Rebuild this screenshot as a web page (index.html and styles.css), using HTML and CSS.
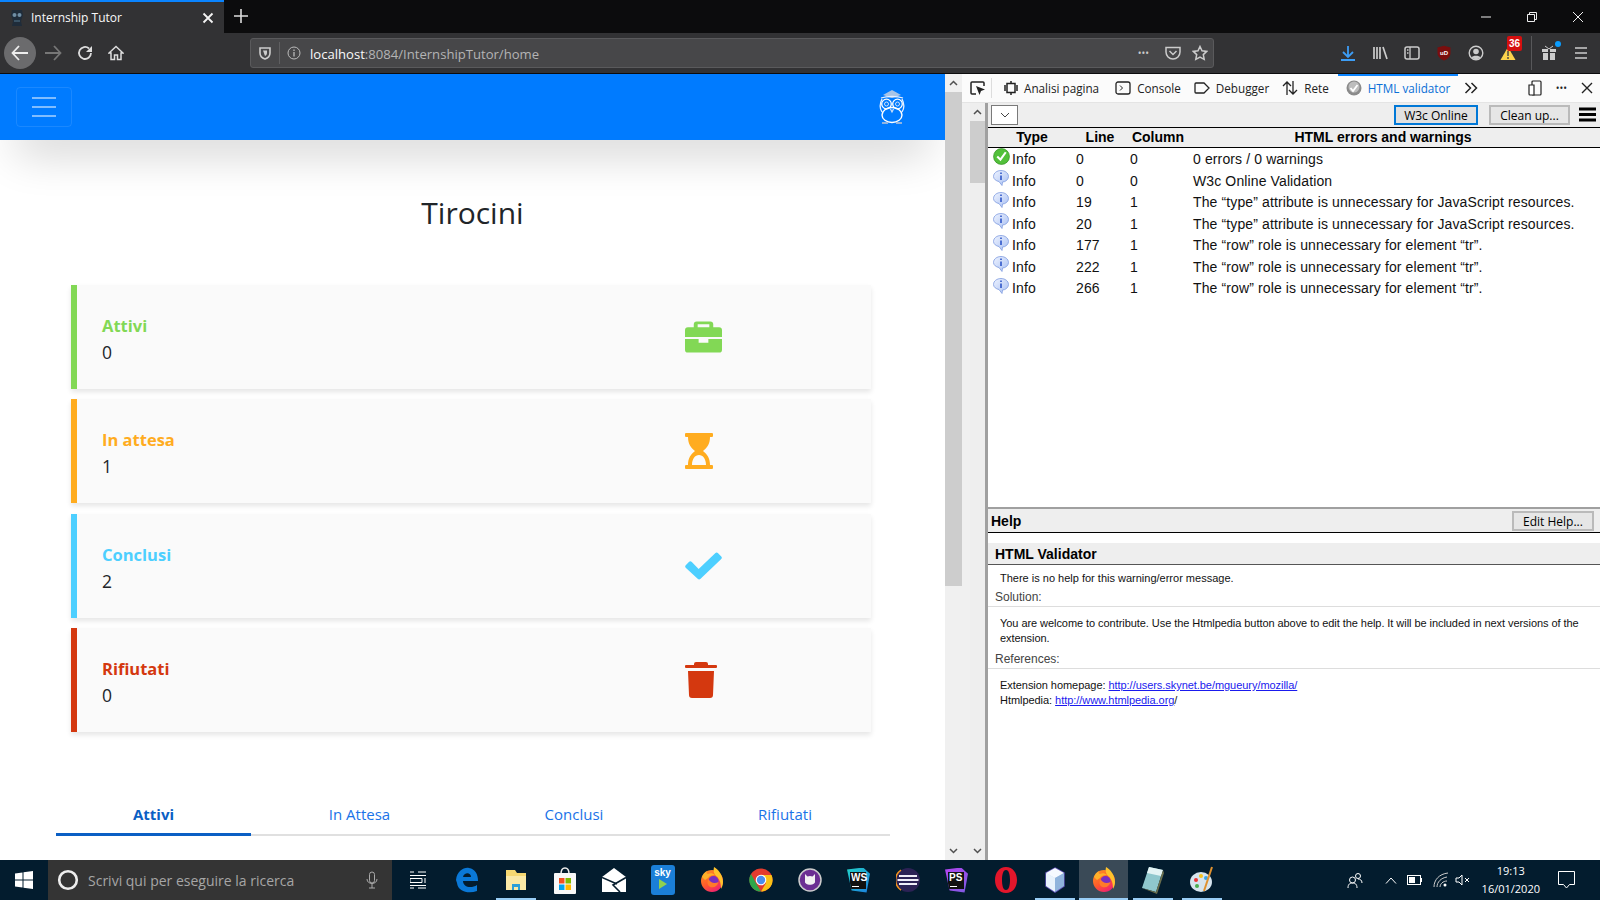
FILE: index.html
```html
<!DOCTYPE html>
<html lang="en">
<head>
    <meta charset="UTF-8">
    <title>Internship Tutor</title>
    <link rel="stylesheet" href="styles.css">
</head>
<body>
    <svg width="0" height="0" class="defs">
        <defs>
            <linearGradient id="ff-body" x1="0" y1="0" x2="0.6" y2="1">
                <stop offset="0" stop-color="#ff9a22"/>
                <stop offset="0.6" stop-color="#ff5b2b"/>
                <stop offset="1" stop-color="#f0246e"/>
            </linearGradient>
            <linearGradient id="info-fill" x1="0" y1="0" x2="1" y2="1">
                <stop offset="0" stop-color="#eef3ff"/>
                <stop offset="1" stop-color="#a9c0f2"/>
            </linearGradient>
            <g id="ff-logo">
                <circle cx="12" cy="14" r="11" fill="url(#ff-body)"/>
                <path d="M14 0c4 2 9 8 9 15 0 3-1 5-2 7 0-7-2-11-5-13-2-2-3-5-2-9z" fill="#ffc22c"/>
                <path d="M2 10c1-3 3-5 5-6-1 2 0 3 1 3 2-1 5-1 7 1-3 0-6 1-7 3l-3 2z" fill="#ffb02a"/>
                <circle cx="13.500" cy="14" r="5" fill="#7a2fc0"/>
                <path d="M8.500 12c2 4 6 5 10 3-1 4-4 6-8 5-3-1-4-5-2-8z" fill="#ff7a2a"/>
            </g>
            <g id="info-icon">
                <path d="M8 .500c4 0 7.500 2.500 7.500 6 0 3-3 5.500-6 5.500l-.5 3.500-3-4C3 11 .500 9 .500 6.500c0-3.500 3.500-6 7.500-6z" fill="url(#info-fill)" stroke="#7d9be0" stroke-width=".8"/>
                <path d="M8 5.500v4.500M8 2.500v1.500" stroke="#2e55c8" stroke-width="1.600"/>
            </g>
        </defs>
    </svg>

    <!-- Tab strip -->
    <div class="tabstrip">
        <div class="tab">
            <svg class="tab-favicon" width="16" height="18" viewBox="0 0 16 18"><path d="M3 1h10l1 5-2 6 1 5H3l1-5-2-6z" fill="#1f2c3a"/><circle cx="5.500" cy="6" r="2" fill="#6f8ea5"/><circle cx="10.500" cy="6" r="2" fill="#6f8ea5"/><path d="M5 12h6" stroke="#55788f"/></svg>
            <span class="tab-title">Internship Tutor</span>
            <svg class="tab-close" width="12" height="12" viewBox="0 0 12 12"><path d="M1.500 1.500l9 9M10.500 1.500l-9 9" stroke="#f4f4f4" stroke-width="1.800"/></svg>
        </div>
        <svg class="tab-new" width="16" height="16" viewBox="0 0 16 16"><path d="M8 1v14M1 8h14" stroke="#ddd" stroke-width="1.600"/></svg>
        <div class="window-btns">
            <svg width="12" height="12" viewBox="0 0 12 12"><path d="M1 6h10" stroke="#eee"/></svg>
            <svg width="12" height="12" viewBox="0 0 12 12"><path d="M1.500 3.500h7v7h-7zM3.500 3V1.500h7v7H9" stroke="#eee" fill="none"/></svg>
            <svg width="12" height="12" viewBox="0 0 12 12"><path d="M1 1l10 10M11 1L1 11" stroke="#eee"/></svg>
        </div>
    </div>

    <!-- Navigation toolbar -->
    <div class="toolbar">
        <div class="nav-btns">
            <div class="back-btn">
                <svg width="18" height="16" viewBox="0 0 18 16"><path d="M8 1L1.500 8 8 15M2 8h15" stroke="#eee" stroke-width="1.800" fill="none"/></svg>
            </div>
            <svg class="nav-icon" width="18" height="16" viewBox="0 0 18 16"><path d="M10 1l6.500 7L10 15M16 8H1" stroke="#777" stroke-width="1.800" fill="none"/></svg>
            <svg class="nav-icon" width="16" height="16" viewBox="0 0 16 16"><path d="M14 8a6 6 0 1 1-2-4.500" stroke="#ddd" stroke-width="1.800" fill="none"/><path d="M15 1v6H9z" fill="#ddd"/></svg>
            <svg class="nav-icon" width="16" height="16" viewBox="0 0 16 16"><path d="M8 1.500L1 8h2v6.500h3.500V10h3v4.500H13V8h2z" stroke="#ddd" stroke-width="1.500" fill="none"/></svg>
        </div>
        <div class="urlbar">
            <svg width="14" height="14" viewBox="0 0 14 14"><path d="M2 2h10v5c0 3-2 5-5 6-3-1-5-3-5-6z" stroke="#ccc" stroke-width="1.600" fill="none"/><path d="M5 4.500h4v2.500c0 1.500-1 2.500-2 3z" fill="#ccc"/></svg>
            <span class="url-sep"></span>
            <svg width="14" height="14" viewBox="0 0 14 14"><circle cx="7" cy="7" r="6" stroke="#bbb" fill="none"/><path d="M7 6v4.500M7 3.500v1.500" stroke="#bbb" stroke-width="1.300"/></svg>
            <span class="url-text"><b>localhost</b>:8084/InternshipTutor/home</span>
            <span class="url-dots">•••</span>
            <svg class="url-pocket" width="16" height="14" viewBox="0 0 16 14"><path d="M1 1.500h14V6a7 7 0 0 1-14 0z" stroke="#ccc" stroke-width="1.500" fill="none"/><path d="M4.500 5L8 8.500 11.500 5" stroke="#ccc" stroke-width="1.500" fill="none"/></svg>
            <svg width="16" height="16" viewBox="0 0 16 16"><path d="M8 1.500l2 4.300 4.700.6-3.400 3.200.9 4.700L8 12l-4.200 2.300.9-4.700L1.300 6.400 6 5.800z" stroke="#ccc" stroke-width="1.500" fill="none"/></svg>
        </div>
        <div class="toolbar-right">
            <svg width="16" height="16" viewBox="0 0 16 16"><path d="M8 1v10M3 7l5 5 5-5M1 15h14" stroke="#3d9df5" stroke-width="1.800" fill="none"/></svg>
            <svg width="16" height="16" viewBox="0 0 16 16"><path d="M2 2v12M5 2v12M8 2v12M11 2l4 12" stroke="#ccc" stroke-width="1.700" fill="none"/></svg>
            <svg width="16" height="16" viewBox="0 0 16 16"><rect x="1" y="2" width="14" height="12" rx="2" stroke="#ccc" stroke-width="1.500" fill="none"/><path d="M6 2v12M3 5h1.500M3 8h1.500" stroke="#ccc" stroke-width="1.300"/></svg>
            <svg width="16" height="16" viewBox="0 0 16 16"><path d="M1.500 2.500L8 .8l6.500 1.700V8c0 3.500-3 6-6.500 7.500C4.500 14 1.500 11.500 1.500 8z" fill="#7a0e0e"/><text x="8" y="10" class="ublock-text">uD</text></svg>
            <svg width="16" height="16" viewBox="0 0 16 16"><circle cx="8" cy="8" r="6.800" stroke="#ccc" stroke-width="1.400" fill="none"/><circle cx="8" cy="6.500" r="2.800" fill="#ccc"/><path d="M3.500 12.500c1-2.500 8-2.500 9 0a7 7 0 0 1-9 0z" fill="#ccc"/></svg>
            <div class="warn-icon">
                <svg width="16" height="15" viewBox="0 0 16 15"><path d="M8 1l7.500 13H.500z" fill="#fbd34c"/><path d="M8 5v5M8 11v2" stroke="#444" stroke-width="1.400"/></svg>
                <span class="warn-badge">36</span>
            </div>
            <span class="toolbar-sep"></span>
            <div class="gift-icon">
                <svg width="16" height="16" viewBox="0 0 16 16"><path d="M1 4h6v3H1zM9 4h6v3H9zM2 8h5v7H2zM9 8h5v7H9z" fill="#ccc"/><path d="M4 1l4 3 4-3" stroke="#ccc" fill="none"/></svg>
                <span class="gift-dot"></span>
            </div>
            <svg width="16" height="14" viewBox="0 0 16 14"><path d="M2 2h12M2 7h12M2 12h12" stroke="#ccc" stroke-width="1.700"/></svg>
        </div>
    </div>

    <div class="main">
        <!-- The page under test -->
        <div class="page">
            <div class="navbar">
                <div class="navbar-toggler">
                    <span></span><span></span><span></span>
                </div>
                <svg class="navbar-logo" width="26" height="36" viewBox="0 0 26 36">
                    <path d="M4 6L13 1l9 5-9 3z" fill="#a9c4e6"/>
                    <path d="M2 9c6-2 16-2 22 0M3 10c-3 6-2 10 0 13" stroke="#e8f1ff" stroke-width="1.300" fill="none"/>
                    <path d="M23 10c3 6 2 10 0 13" stroke="#e8f1ff" stroke-width="1.300" fill="none"/>
                    <circle cx="7.500" cy="15" r="4.800" stroke="#fff" stroke-width="1.300" fill="none"/>
                    <circle cx="18.500" cy="15" r="4.800" stroke="#fff" stroke-width="1.300" fill="none"/>
                    <circle cx="7.500" cy="15" r="2" stroke="#cfe0f7" fill="none"/>
                    <circle cx="18.500" cy="15" r="2" stroke="#cfe0f7" fill="none"/>
                    <path d="M11.500 20l1.500 3 1.500-3" stroke="#cfe0f7" stroke-width="1.200" fill="none"/>
                    <ellipse cx="13" cy="26" rx="10" ry="7.500" stroke="#fff" stroke-width="1.400" fill="none"/>
                    <path d="M3 34h6M17 34h6" stroke="#8fb3e0" stroke-width="2"/>
                </svg>
            </div>
            <h1 class="page-title">Tirocini</h1>

            <div class="stats">
                <div class="stat stat-green">
                    <div class="stat-text"><h5>Attivi</h5><p>0</p></div>
                    <svg class="stat-icon" width="37" height="32" viewBox="0 0 38 32"><path d="M12 0h14a3 3 0 0 1 3 3v3h6a3 3 0 0 1 3 3v7H0V9a3 3 0 0 1 3-3h6V3a3 3 0 0 1 3-3zm1 3v3h12V3zM0 18h14v4h10v-4h14v11a3 3 0 0 1-3 3H3a3 3 0 0 1-3-3z" fill="#82d855" fill-rule="evenodd"/></svg>
                </div>
                <div class="stat stat-orange">
                    <div class="stat-text"><h5>In attesa</h5><p>1</p></div>
                    <svg class="stat-icon" width="28" height="36" viewBox="0 0 28 36"><path d="M1 0h26a1 1 0 0 1 1 1v2a1 1 0 0 1-1 1h-2c0 7-3 11-7 14 4 3 7 7 7 14h2a1 1 0 0 1 1 1v2a1 1 0 0 1-1 1H1a1 1 0 0 1-1-1v-2a1 1 0 0 1 1-1h2c0-7 3-11 7-14-4-3-7-7-7-14H1a1 1 0 0 1-1-1V1a1 1 0 0 1 1-1zm6 32h14c0-6-3-10-7-10s-7 4-7 10z" fill="#ffac1f" fill-rule="evenodd"/></svg>
                </div>
                <div class="stat stat-blue">
                    <div class="stat-text"><h5>Conclusi</h5><p>2</p></div>
                    <svg class="stat-icon" width="37" height="28" viewBox="0 0 38 28"><path d="M13 27L1 16a2 2 0 0 1 0-3l3-3a2 2 0 0 1 3 0l7 7L31 1a2 2 0 0 1 3 0l3 3a2 2 0 0 1 0 3L16 27a2 2 0 0 1-3 0z" fill="#4dcfff"/></svg>
                </div>
                <div class="stat stat-red">
                    <div class="stat-text"><h5>Rifiutati</h5><p>0</p></div>
                    <svg class="stat-icon" width="32" height="36" viewBox="0 0 32 36"><path d="M11 0h10a2 2 0 0 1 2 2v1h8a1 1 0 0 1 1 1v1a1 1 0 0 1-1 1H1A1 1 0 0 1 0 5V4a1 1 0 0 1 1-1h8V2a2 2 0 0 1 2-2zM3 9h26l-1 24a3 3 0 0 1-3 3H7a3 3 0 0 1-3-3z" fill="#d4380f"/></svg>
                </div>
            </div>

            <div class="tabs">
                <a class="tabs-item active">Attivi</a>
                <a class="tabs-item">In Attesa</a>
                <a class="tabs-item">Conclusi</a>
                <a class="tabs-item">Rifiutati</a>
            </div>
        </div>

        <div class="scrollbar">
            <div class="scroll-arrow"><svg width="9" height="6" viewBox="0 0 9 6"><path d="M1 5l3.500-3.500L8 5" stroke="#505050" stroke-width="1.500" fill="none"/></svg></div>
            <div class="scroll-thumb outer-thumb"></div>
            <div class="scroll-space"></div>
            <div class="scroll-arrow"><svg width="9" height="6" viewBox="0 0 9 6"><path d="M1 1l3.500 3.500L8 1" stroke="#505050" stroke-width="1.500" fill="none"/></svg></div>
        </div>

        <!-- Devtools -->
        <div class="devtools">
            <div class="dev-tabs">
                <svg class="dev-picker" width="16" height="16" viewBox="0 0 16 16"><path d="M6 14H2a1 1 0 0 1-1-1V3a1 1 0 0 1 1-1h11a1 1 0 0 1 1 1v3" stroke="#222" stroke-width="1.500" fill="none"/><path d="M6 6l9 3.500-4 1.500-1.500 4z" fill="#222"/></svg>
                <span class="dev-sep"></span>
                <div class="dev-tab dev-tab-first"><svg width="14" height="16" viewBox="0 0 14 16"><path d="M3 3.500h8v9H3zM7 1v2M7 13v2M1 5v6M13 5v6" stroke="#222" stroke-width="1.500" fill="none"/></svg>Analisi pagina</div>
                <div class="dev-tab"><svg width="16" height="14" viewBox="0 0 16 14"><rect x="1" y="1" width="14" height="12" rx="2" stroke="#222" stroke-width="1.300" fill="none"/><path d="M5 4.500L7.500 7 5 9.500" stroke="#222" fill="none"/></svg>Console</div>
                <div class="dev-tab"><svg width="16" height="12" viewBox="0 0 16 12"><path d="M2 1h8l5 5-5 5H2a1 1 0 0 1-1-1V2a1 1 0 0 1 1-1z" stroke="#222" stroke-width="1.300" fill="none"/></svg>Debugger</div>
                <div class="dev-tab"><svg width="16" height="16" viewBox="0 0 16 16"><path d="M5 15V2M1 6l4-4 4 4M11 1v13M7 10l4 4 4-4" stroke="#222" stroke-width="1.300" fill="none"/></svg>Rete</div>
                <div class="dev-tab dev-tab-active"><svg width="16" height="16" viewBox="0 0 16 16"><circle cx="8" cy="8" r="7.500" fill="#8a8a8a"/><circle cx="8" cy="7" r="5.500" fill="#bdbdbd"/><path d="M4.500 8l2.500 3 4.500-6" stroke="#fff" stroke-width="1.800" fill="none"/></svg>HTML validator</div>
                <svg class="dev-more" width="14" height="12" viewBox="0 0 14 12"><path d="M1.500 1l5 5-5 5M7.500 1l5 5-5 5" stroke="#222" stroke-width="1.500" fill="none"/></svg>
                <div class="dev-tools-right">
                    <svg width="14" height="16" viewBox="0 0 14 16"><rect x="4" y="1" width="9" height="14" rx="1" stroke="#222" stroke-width="1.200" fill="none"/><path d="M1 5v9a1 1 0 0 0 1 1h4V5z" fill="#fff" stroke="#222" stroke-width="1.200"/></svg>
                    <span class="dev-dots">•••</span>
                    <svg width="12" height="12" viewBox="0 0 12 12"><path d="M1 1l10 10M11 1L1 11" stroke="#222" stroke-width="1.400"/></svg>
                </div>
            </div>
            <div class="dev-body">
                <div class="scrollbar inner">
                    <div class="scroll-arrow"><svg width="9" height="6" viewBox="0 0 9 6"><path d="M1 5l3.500-3.500L8 5" stroke="#505050" stroke-width="1.500" fill="none"/></svg></div>
                    <div class="scroll-thumb inner-thumb"></div>
                    <div class="scroll-space"></div>
                    <div class="scroll-arrow"><svg width="9" height="6" viewBox="0 0 9 6"><path d="M1 1l3.500 3.500L8 1" stroke="#505050" stroke-width="1.500" fill="none"/></svg></div>
                </div>
                <div class="validator">
                    <div class="val-toolbar">
                        <div class="val-select"><svg width="10" height="6" viewBox="0 0 10 6"><path d="M1 1l4 4 4-4" stroke="#444" fill="none"/></svg></div>
                        <button class="val-btn val-btn-focus">W3c Online</button>
                        <button class="val-btn">Clean up...</button>
                        <svg class="val-menu" width="17" height="16" viewBox="0 0 17 16"><path d="M0 2h17M0 7.500h17M0 13h17" stroke="#000" stroke-width="3"/></svg>
                    </div>
                    <div class="val-head">
                        <span>Type</span>
                        <span>Line</span>
                        <span>Column</span>
                        <span>HTML errors and warnings</span>
                    </div>
                    <div class="val-rows">
                        <div class="val-row"><span class="row-icon"><svg width="17" height="17" viewBox="0 0 16 16"><circle cx="8" cy="8" r="7.500" fill="#52c03a" stroke="#2d8a1e" stroke-width=".6"/><path d="M4 8l3 3 5-7" stroke="#fff" stroke-width="2" fill="none"/></svg></span><span class="cell-type">Info</span><span class="cell-line">0</span><span class="cell-col">0</span><span>0 errors / 0 warnings</span></div>
                        <div class="val-row"><span class="row-icon"><svg width="16" height="16" viewBox="0 0 16 16"><use href="#info-icon"/></svg></span><span class="cell-type">Info</span><span class="cell-line">0</span><span class="cell-col">0</span><span>W3c Online Validation</span></div>
                        <div class="val-row"><span class="row-icon"><svg width="16" height="16" viewBox="0 0 16 16"><use href="#info-icon"/></svg></span><span class="cell-type">Info</span><span class="cell-line">19</span><span class="cell-col">1</span><span>The “type” attribute is unnecessary for JavaScript resources.</span></div>
                        <div class="val-row"><span class="row-icon"><svg width="16" height="16" viewBox="0 0 16 16"><use href="#info-icon"/></svg></span><span class="cell-type">Info</span><span class="cell-line">20</span><span class="cell-col">1</span><span>The “type” attribute is unnecessary for JavaScript resources.</span></div>
                        <div class="val-row"><span class="row-icon"><svg width="16" height="16" viewBox="0 0 16 16"><use href="#info-icon"/></svg></span><span class="cell-type">Info</span><span class="cell-line">177</span><span class="cell-col">1</span><span>The “row” role is unnecessary for element “tr”.</span></div>
                        <div class="val-row"><span class="row-icon"><svg width="16" height="16" viewBox="0 0 16 16"><use href="#info-icon"/></svg></span><span class="cell-type">Info</span><span class="cell-line">222</span><span class="cell-col">1</span><span>The “row” role is unnecessary for element “tr”.</span></div>
                        <div class="val-row"><span class="row-icon"><svg width="16" height="16" viewBox="0 0 16 16"><use href="#info-icon"/></svg></span><span class="cell-type">Info</span><span class="cell-line">266</span><span class="cell-col">1</span><span>The “row” role is unnecessary for element “tr”.</span></div>
                    </div>
                    <div class="help-bar">
                        <span class="help-title">Help</span>
                        <button class="val-btn">Edit Help...</button>
                    </div>
                    <div class="help-body">
                        <h3 class="help-h3">HTML Validator</h3>
                        <p class="help-text help-first">There is no help for this warning/error message.</p>
                        <div class="help-sub">Solution:</div>
                        <p class="help-text help-para">You are welcome to contribute. Use the Htmlpedia button above to edit the help. It will be included in next versions of the extension.</p>
                        <div class="help-sub">References:</div>
                        <p class="help-text help-refs">Extension homepage: <a>http://users.skynet.be/mgueury/mozilla/</a><br>Htmlpedia: <a>http://www.htmlpedia.org</a>/</p>
                    </div>
                </div>
            </div>
        </div>
    </div>

    <!-- Windows taskbar -->
    <div class="taskbar">
        <div class="start"><svg width="18" height="18" viewBox="0 0 18 18"><path d="M0 2.500L7.500 1.400V8.500H0zM8.500 1.300L18 0v8.500H8.500zM0 9.500h7.500v7.100L0 15.500zM8.500 9.500H18V18l-9.500-1.300z" fill="#fff"/></svg></div>
        <div class="search">
            <svg width="22" height="22" viewBox="0 0 22 22"><circle cx="11" cy="11" r="8.800" stroke="#eee" stroke-width="2.600" fill="none"/></svg>
            <span class="search-text">Scrivi qui per eseguire la ricerca</span>
            <svg width="12" height="18" viewBox="0 0 12 18"><rect x="3.500" y="1" width="5" height="11" rx="2.500" stroke="#aaa" fill="none"/><path d="M1 8c0 6 10 6 10 0M6 13v4M3 17h6" stroke="#aaa" fill="none"/></svg>
        </div>
        <div class="task-apps">
            <div class="app"><svg width="16" height="18" viewBox="0 0 16 18"><path d="M0 1h4M8 1h8M0 4.500h16M0 7.500h12v4H0zM0 14.500h16M0 17h4M8 17h8M15 7v5" stroke="#fff" fill="none"/></svg></div>
            <div class="app"><svg width="24" height="26" viewBox="0 0 24 26"><path d="M1 13C2 4 9 0 14 1c6 1 9 6 9 13H8c0 6 8 8 14 4v6c-8 3-19 1-20-8zm7-3h8c0-5-7-5-8 0z" fill="#0a78d7" fill-rule="evenodd"/></svg></div>
            <div class="app running"><svg width="24" height="24" viewBox="0 0 24 24"><path d="M2 2h9l2 3h9v17H2z" fill="#f6d871"/><rect x="2" y="8" width="20" height="14" fill="#fbe9a6"/><path d="M8 22v-6h8v6z" fill="#2b9fd9"/><rect x="10" y="19" width="4" height="3" fill="#fbe9a6"/></svg></div>
            <div class="app"><svg width="24" height="28" viewBox="0 0 24 28"><path d="M8 8c0-8 8-8 8 0" stroke="#eee" stroke-width="1.500" fill="none"/><rect x="1" y="7" width="22" height="21" rx="1" fill="#f8f8f8"/><rect x="6" y="12" width="5.500" height="5.500" fill="#f25022"/><rect x="12.500" y="12" width="5.500" height="5.500" fill="#7fba00"/><rect x="6" y="18.500" width="5.500" height="5.500" fill="#00a4ef"/><rect x="12.500" y="18.500" width="5.500" height="5.500" fill="#ffb900"/></svg></div>
            <div class="app"><svg width="24" height="24" viewBox="0 0 24 24"><path d="M0 9L12 0l12 9v15H0z" fill="#fff"/><path d="M0 9.500l15 6.500M24 9.500L11 17l7 7" stroke="#061d2e" stroke-width="1.600" fill="none"/></svg></div>
            <div class="app"><div class="sky-icon"><span class="sky-word">sky</span><svg width="8" height="10" viewBox="0 0 8 10"><path d="M0 0l8 5-8 5z" fill="#8fd14f"/></svg></div></div>
            <div class="app"><svg width="24" height="26" viewBox="0 0 24 26"><use href="#ff-logo"/></svg></div>
            <div class="app"><svg width="24" height="24" viewBox="0 0 24 24"><circle cx="12" cy="12" r="11.500" fill="#e33b2e"/><path d="M2 6l6 11 4 6.500A11.500 11.500 0 0 1 2 6z" fill="#2ea64a"/><path d="M12 7h10.500A11.500 11.500 0 0 1 12 23.500L17 15z" fill="#fbc116"/><circle cx="12" cy="12" r="5.300" fill="#fff"/><circle cx="12" cy="12" r="4.200" fill="#4a8df0"/></svg></div>
            <div class="app"><svg width="24" height="24" viewBox="0 0 24 24"><circle cx="12" cy="12" r="11" fill="#6b2f93" stroke="#ccc" stroke-width="1.500"/><path d="M7 6l2.500 2.500c2-.7 3-.7 5 0L17 6v7c1 5-11 5-10 0z" fill="#f2f2f2"/></svg></div>
            <div class="app"><div class="ws-icon"><span>WS</span></div></div>
            <div class="app"><svg width="24" height="24" viewBox="0 0 24 24"><circle cx="12" cy="12" r="12" fill="#2c2255"/><path d="M3 8h18M1.500 12h21M3 16h18" stroke="#f0eef8" stroke-width="2"/><path d="M5 2a12 12 0 0 0 0 20" stroke="#f7941e" stroke-width="1.500" fill="none"/></svg></div>
            <div class="app"><div class="ps-icon"><span>PS</span></div></div>
            <div class="app"><svg width="24" height="26" viewBox="0 0 24 26"><path d="M12 0C5 0 1 6 1 13s4 13 11 13 11-6 11-13S19 0 12 0zm0 3c3 0 4 5 4 10s-1 10-4 10-4-5-4-10 1-10 4-10z" fill="#e3162b" fill-rule="evenodd"/></svg></div>
            <div class="app running"><svg width="22" height="26" viewBox="0 0 22 26"><path d="M11 1l9 5v13l-9 6-9-6V6z" fill="#bdd7f5" stroke="#5b4fb0" stroke-width="1.500"/><path d="M11 11v14l-9-6V6z" fill="#e8f2fc"/><path d="M11 1l9 5-9 5-9-5z" fill="#f5f9ff"/><path d="M20 6v13l-9 6V11z" fill="#8fb3dc"/></svg></div>
            <div class="app app-active running"><svg width="24" height="26" viewBox="0 0 24 26"><use href="#ff-logo"/></svg></div>
            <div class="app running"><svg width="24" height="28" viewBox="0 0 24 28"><path d="M8 1l14 3-7 22-14-4z" fill="#8fc7cd"/><path d="M8 1l14 3-2 6-14-3z" fill="#e3f3f4"/><path d="M1 22l14 4 7-22 1 3-7 21z" fill="#6b6f4e"/></svg></div>
            <div class="app running"><svg width="24" height="28" viewBox="0 0 24 28"><ellipse cx="11" cy="16" rx="11" ry="10" fill="#d7e4ee"/><circle cx="6" cy="14" r="2" fill="#e33"/><circle cx="11" cy="10" r="2" fill="#f6c21c"/><circle cx="16" cy="12" r="2" fill="#38a4e8"/><circle cx="7" cy="20" r="2" fill="#4caf50"/><path d="M22 1l-8 24" stroke="#e0912f" stroke-width="2"/></svg></div>
        </div>
        <div class="tray">
            <svg width="16" height="16" viewBox="0 0 16 16"><circle cx="5.500" cy="8" r="3" stroke="#fff" fill="none"/><circle cx="11" cy="4" r="2.500" stroke="#fff" fill="none"/><path d="M1 16c0-4 2-5 4.500-5S10 12 10 16M11 7c2 0 4 1 4 4" stroke="#fff" fill="none"/></svg>
            <svg class="tray-chevron" width="12" height="7" viewBox="0 0 12 7"><path d="M1 6.500L6 1l5 5.500" stroke="#fff" fill="none"/></svg>
            <svg class="tray-battery" width="16" height="10" viewBox="0 0 16 10"><rect x=".5" y=".5" width="13" height="9" stroke="#fff" fill="none"/><rect x="2" y="2" width="6" height="6" fill="#fff"/><path d="M14.500 3v4" stroke="#fff"/></svg>
            <svg class="tray-wifi" width="16" height="16" viewBox="0 0 16 16"><path d="M1 15C1 8 6 2 15 1M4 15c0-5 4-9 10-10M7 15c0-3 3-6 7-6" stroke="#ccc" fill="none"/><circle cx="12" cy="13" r="1.500" fill="#fff"/></svg>
            <svg width="16" height="14" viewBox="0 0 16 14"><path d="M1 5v4h3l3 3V2L4 5z" stroke="#fff" fill="none"/><path d="M10 5l4 4M14 5l-4 4" stroke="#fff"/></svg>
            <div class="clock"><div>19:13</div><div>16/01/2020</div></div>
            <svg class="tray-notify" width="17" height="18" viewBox="0 0 17 18"><path d="M.5.500h16v13h-5l-3 3.500-3-3.500h-5z" stroke="#fff" fill="none"/></svg>
        </div>
    </div>
</body>
</html>
```

FILE: styles.css
```css
* {
    margin: 0;
    padding: 0;
    box-sizing: border-box;
}
body {
    width: 1600px;
    height: 900px;
    overflow: hidden;
    font-family: "Open Sans", "Noto Sans", sans-serif;
    background-color: #fff;
}
.defs {
    position: absolute;
}

/* Browser chrome */
.tabstrip {
    display: flex;
    align-items: stretch;
    height: 33px;
    background-color: #0c0c0d;
}
.tab {
    display: flex;
    align-items: center;
    width: 224px;
    padding: 0 10px 0 9px;
    background-color: #323234;
    border-top: 2px solid #0a84ff;
    color: #f9f9fa;
}
.tab-title {
    flex: 1;
    margin-left: 6px;
    font-size: 12px;
}
.tab-new {
    align-self: center;
    margin: -1px 0 0 9px;
}
.window-btns {
    display: flex;
    align-items: center;
    gap: 34px;
    margin-left: auto;
    padding-right: 16px;
}
.toolbar {
    display: flex;
    align-items: center;
    height: 41px;
    background-color: #323234;
    border-bottom: 1px solid #0c0c0d;
}
.nav-btns {
    display: flex;
    align-items: center;
    width: 250px;
    padding-left: 4px;
}
.back-btn {
    display: flex;
    align-items: center;
    justify-content: center;
    width: 32px;
    height: 32px;
    border-radius: 50%;
    background-color: #6b6b6d;
}
.nav-icon:nth-child(2) {
    margin-left: 8px;
}
.nav-icon:nth-child(3) {
    margin-left: 15px;
}
.nav-icon:nth-child(4) {
    margin-left: 15px;
}
.urlbar {
    display: flex;
    align-items: center;
    gap: 7px;
    width: 964px;
    height: 30px;
    padding: 0 5px 0 7px;
    background-color: #474749;
    border: 1px solid #5a5a5c;
    border-radius: 3px;
}
.url-sep {
    width: 1px;
    height: 22px;
    background-color: #5f5f61;
}
.url-text {
    flex: 1;
    margin: 1px 0 0 2px;
    font-size: 13.100px;
    color: #b4b4b5;
}
.url-text b {
    font-weight: normal;
    color: #f9f9fa;
}
.url-dots {
    margin-right: 9px;
    font-size: 10px;
    color: #ccc;
}
.url-pocket {
    margin-right: 4px;
}
.toolbar-right {
    display: flex;
    align-items: center;
    gap: 16px;
    margin-left: 126px;
}
.ublock-text {
    font-family: "Liberation Sans", sans-serif;
    font-size: 6px;
    font-weight: bold;
    fill: #fff;
    text-anchor: middle;
}
.warn-icon, .gift-icon {
    position: relative;
    display: flex;
}
.warn-badge {
    position: absolute;
    top: -10px;
    left: 7px;
    padding: 0 2px;
    height: 15px;
    line-height: 15px;
    font-family: "Liberation Sans", sans-serif;
    font-size: 10px;
    font-weight: bold;
    color: #fff;
    background-color: #d50f0f;
    border-radius: 2px;
}
.toolbar-sep {
    width: 1px;
    height: 34px;
    margin: 0 -7px 0 -1px;
    background-color: #58585a;
}
.gift-dot {
    position: absolute;
    top: -4px;
    right: -4px;
    width: 6px;
    height: 6px;
    border-radius: 50%;
    background-color: #0a9dff;
}

/* Main area */
.main {
    display: flex;
    height: 786px;
}
.page {
    width: 945px;
    overflow: hidden;
    background-color: #fff;
}
.navbar {
    display: flex;
    align-items: center;
    justify-content: space-between;
    height: 66px;
    padding: 0 40px 0 16px;
    background-color: #007bff;
    box-shadow: 0 28px 46px -16px rgba(0, 0, 0, 0.2);
}
.navbar-toggler {
    display: flex;
    flex-direction: column;
    align-items: center;
    justify-content: center;
    gap: 7px;
    width: 56px;
    height: 40px;
    border: 1px solid rgba(255, 255, 255, 0.1);
    border-radius: 4px;
}
.navbar-toggler span {
    width: 24px;
    height: 2px;
    background-color: rgba(255, 255, 255, 0.5);
}
.page-title {
    margin-top: 51px;
    text-align: center;
    font-size: 30px;
    font-weight: 400;
    line-height: 43px;
    color: #212529;
}
.stats {
    display: flex;
    flex-direction: column;
    gap: 10.400px;
    width: 800px;
    margin: 51px 0 0 71px;
}
.stat {
    display: flex;
    align-items: center;
    height: 104px;
    padding-left: 25px;
    background-color: #fafafa;
    border-left: 6px solid #000;
    box-shadow: 0 3px 5px rgba(0, 0, 0, 0.1);
}
.stat-text {
    width: 583px;
    padding-top: 4px;
}
.stat h5 {
    font-size: 16.500px;
    font-weight: 700;
    line-height: 25px;
    margin-bottom: 2px;
}
.stat p {
    font-size: 17.500px;
    line-height: 25px;
    color: #212529;
}
.stat-green {
    border-left-color: #82d855;
}
.stat-green h5 {
    color: #82d855;
}
.stat-orange {
    border-left-color: #ffac1f;
}
.stat-orange h5 {
    color: #ffac1f;
}
.stat-blue {
    border-left-color: #4dcfff;
}
.stat-blue h5 {
    color: #4dcfff;
}
.stat-red {
    border-left-color: #d4380f;
}
.stat-red h5 {
    color: #d4380f;
}
.tabs {
    display: grid;
    grid-template-columns: 195px 217px 212px 210px;
    width: 834px;
    margin: 63px 0 0 56px;
    border-bottom: 2px solid #e0e0e0;
}
.tabs-item {
    height: 41px;
    margin-bottom: -2px;
    padding-top: 8px;
    text-align: center;
    font-size: 15px;
    line-height: 22px;
    color: #1a73e8;
}
.tabs-item.active {
    font-weight: 700;
    color: #0a5fc4;
    border-bottom: 3px solid #0a5fc4;
}

/* Scrollbars */
.scrollbar {
    display: flex;
    flex-direction: column;
    width: 17px;
    background-color: #f0f0f0;
}
.scroll-arrow {
    display: flex;
    align-items: center;
    justify-content: center;
    height: 18px;
}
.scroll-thumb {
    background-color: #cdcdcd;
}
.outer-thumb {
    height: 494px;
}
.inner-thumb {
    height: 62px;
}
.scroll-space {
    flex: 1;
}

/* Devtools */
.devtools {
    display: flex;
    flex-direction: column;
    flex: 1;
}
.dev-tabs {
    display: flex;
    align-items: center;
    height: 29px;
    padding-left: 8px;
    background-color: #fbfbfb;
    font-size: 11.700px;
    color: #222;
    border-bottom: 1px solid #e4e4e4;
}
.dev-sep {
    width: 1px;
    height: 20px;
    margin: 0 8px 0 5px;
    background-color: #ddd;
}
.dev-tab {
    display: flex;
    align-items: center;
    gap: 6px;
    height: 29px;
    padding: 0 9px 0 4px;
    white-space: nowrap;
}
.dev-tab-first {
    padding-right: 12px;
}
.dev-tab-active {
    color: #0a6fd6;
    border-top: 2px solid #0a84ff;
    padding: 0 8px 2px 8px;
}
.dev-more {
    margin-left: 6px;
}
.dev-tools-right {
    display: flex;
    align-items: center;
    gap: 14px;
    margin-left: auto;
    padding-right: 7px;
}
.dev-dots {
    font-size: 10px;
}
.dev-body {
    display: flex;
    flex: 1;
    min-height: 0;
    padding-left: 8px;
    background-color: #f0f0f0;
}
.scrollbar.inner {
    width: 15px;
    background-color: #eee;
}
.validator {
    display: flex;
    flex-direction: column;
    flex: 1;
    border-left: 3px solid #a0a0a0;
    background-color: #fff;
    font-family: "Liberation Sans", Arial, sans-serif;
    color: #000;
}
.val-toolbar {
    display: flex;
    align-items: center;
    height: 24px;
    padding-left: 3px;
    background-color: #eee;
}
.val-select {
    display: flex;
    align-items: center;
    justify-content: center;
    width: 27px;
    height: 20px;
    background-color: #fff;
    border: 1px solid #7a7a7a;
}
.val-btn {
    height: 20px;
    padding: 0;
    font-family: "Open Sans", sans-serif;
    font-size: 12px;
    white-space: nowrap;
    color: #000;
    background-color: #e6e6e6;
    border: 2px solid #bababa;
}
.val-toolbar .val-btn-focus {
    width: 84px;
    margin-left: auto;
    background-color: #e1e1e1;
    border-color: #0078d7;
}
.val-toolbar .val-btn:not(.val-btn-focus) {
    width: 81px;
    margin-left: 11px;
}
.val-menu {
    margin: 0 4px 0 9px;
}
.val-head {
    display: grid;
    grid-template-columns: 88px 48px 68px 382px;
    height: 21px;
    line-height: 19px;
    background-color: #eee;
    border-top: 1px solid #000;
    border-bottom: 1px solid #000;
    font-size: 14px;
    font-weight: bold;
    text-align: center;
}
.val-rows {
    flex: 1;
    min-height: 0;
    padding-top: 0.300px;
}
.val-row {
    display: flex;
    align-items: center;
    height: 21.500px;
    font-size: 14px;
    letter-spacing: 0.120px;
    color: #111;
}
.row-icon {
    display: flex;
    width: 24px;
    padding: 0 0 5px 5px;
    flex-shrink: 0;
}
.cell-type {
    width: 64px;
}
.cell-line {
    width: 54px;
}
.cell-col {
    width: 63px;
}
.help-bar {
    display: flex;
    align-items: center;
    justify-content: space-between;
    height: 26px;
    padding: 0 6px 0 3px;
    background-color: #eee;
    border-top: 2px solid #a0a0a0;
    border-bottom: 1px solid #000;
}
.help-title {
    font-size: 14px;
    font-weight: bold;
}
.help-bar .val-btn {
    width: 82px;
}
.help-body {
    height: 327px;
    padding-top: 10px;
}
.help-h3 {
    height: 22px;
    padding-left: 7px;
    font-size: 14px;
    line-height: 22px;
    background-color: #eee;
    border-bottom: 1px solid #555;
}
.help-text {
    padding-left: 12px;
    font-size: 11px;
    line-height: 15px;
    color: #111;
}
.help-first {
    margin-top: 6px;
}
.help-sub {
    height: 18px;
    margin-top: 3px;
    padding-left: 7px;
    font-size: 12px;
    line-height: 17px;
    color: #444;
    border-bottom: 1px solid #ddd;
}
.help-para {
    margin: 9px 0 5px;
    padding-right: 14px;
    letter-spacing: -0.060px;
}
.help-refs {
    margin-top: 9px;
    letter-spacing: -0.050px;
}
.help-refs a {
    color: #1a1aee;
    text-decoration: underline;
}

/* Windows taskbar */
.taskbar {
    display: flex;
    align-items: center;
    height: 40px;
    background-color: #031c2e;
}
.start {
    display: flex;
    align-items: center;
    justify-content: center;
    width: 48px;
    height: 40px;
}
.search {
    display: flex;
    align-items: center;
    width: 344px;
    height: 40px;
    padding: 0 14px 0 9px;
    background-color: #343434;
}
.search-text {
    flex: 1;
    margin-left: 9px;
    font-size: 14px;
    color: #a6a6a6;
}
.task-apps {
    display: flex;
    height: 40px;
    margin-left: 1px;
}
.app {
    display: flex;
    align-items: center;
    justify-content: center;
    width: 49px;
    height: 40px;
}
.app.running {
    background: linear-gradient(#99cdf5, #99cdf5) center bottom / 40px 2px no-repeat;
}
.app.app-active {
    background: linear-gradient(#99cdf5, #99cdf5) center bottom / 49px 2px no-repeat, #3a4a57;
}
.sky-icon {
    display: flex;
    flex-direction: column;
    align-items: center;
    width: 24px;
    height: 30px;
    padding-top: 1px;
    border-radius: 3px;
    background-color: #1b7fd8;
}
.sky-word {
    font-family: "Liberation Sans", sans-serif;
    font-size: 10px;
    font-weight: bold;
    line-height: 13px;
    color: #fff;
}
.ws-icon, .ps-icon {
    width: 23px;
    height: 25px;
    padding: 4px 0 0 3px;
    font-family: "Liberation Sans", sans-serif;
    font-size: 10px;
    font-weight: bold;
    color: #fff;
    clip-path: polygon(0 8%, 70% 0, 100% 25%, 85% 100%, 20% 92%);
}
.ws-icon {
    background: linear-gradient(135deg, #22d0c8, #1b7fe0);
}
.ps-icon {
    background: linear-gradient(135deg, #b345f1, #7c5be0);
}
.ws-icon span, .ps-icon span {
    display: block;
    width: 16px;
    height: 17px;
    padding-left: 1px;
    line-height: 12px;
    background: linear-gradient(#fff, #fff) 2px 14px / 7px 1px no-repeat, #111;
}
.tray {
    display: flex;
    align-items: center;
    gap: 6px;
    margin-left: auto;
    padding-right: 25px;
}
.tray-chevron {
    margin-left: 16px;
}
.tray-battery {
    margin-left: 4px;
}
.tray-wifi {
    margin-left: 4px;
}
.clock {
    margin: 0 12px 0 5px;
    text-align: center;
    font-size: 11px;
    line-height: 18px;
    color: #fff;
}
```
